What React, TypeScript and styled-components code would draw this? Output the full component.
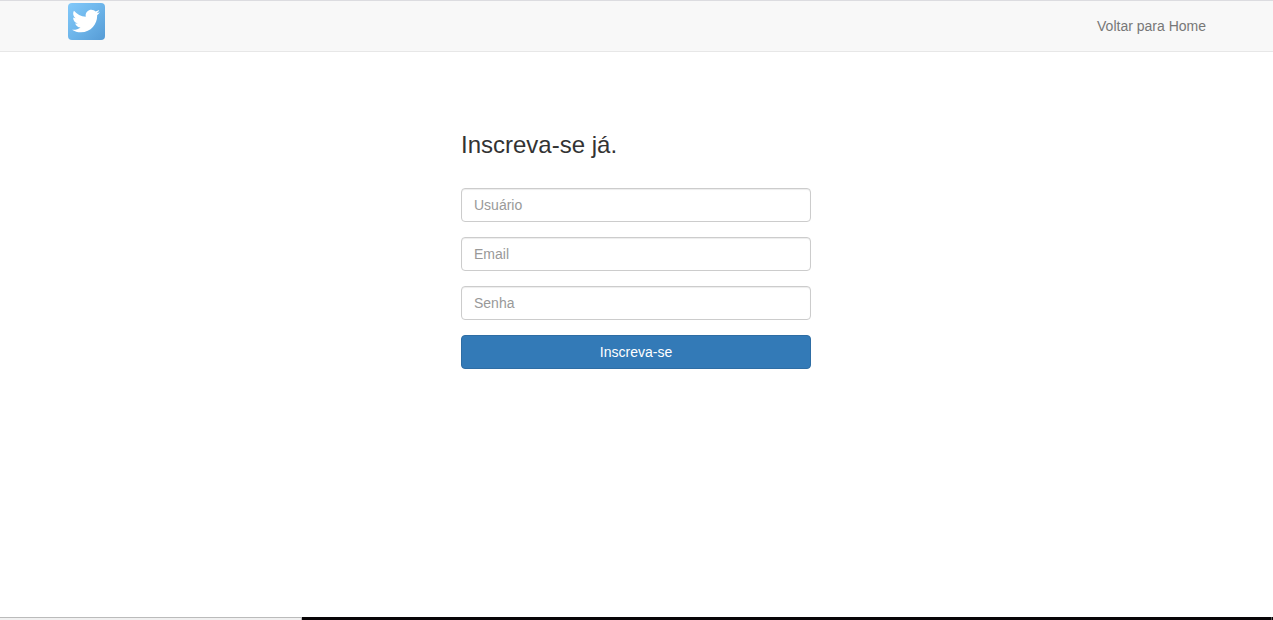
import React from "react";
import styled, { createGlobalStyle } from "styled-components";
import { FaTwitter } from "react-icons/fa";

const GlobalStyle = createGlobalStyle`
  *, *::before, *::after { box-sizing: border-box; }
  body {
    margin: 0;
    background: #fff;
    color: #333;
    font: 14px/20px "Liberation Sans", Arial, sans-serif;
    overflow: hidden;
  }
`;

const Page = styled.div`
  display: flex;
  flex-direction: column;
  height: 620px;
`;

const Navbar = styled.nav`
  height: 52px;
  flex: none;
  background: #f8f8f8;
  border-top: 1px solid #dcdce0;
  border-bottom: 1px solid #e7e7e7;
`;

const NavInner = styled.div`
  display: flex;
  justify-content: space-between;
  align-items: flex-start;
  padding: 2px 67px 0 68px;
`;

const Logo = styled.a`
  display: flex;
  align-items: center;
  justify-content: center;
  width: 37px;
  height: 37px;
  padding: 0 1px 1px 0;
  border-radius: 4px;
  color: #fff;
  background: linear-gradient(135deg, #82c9fa 0%, #6db5ea 50%, #569bd5 100%);
`;

const NavLink = styled.a`
  padding: 13px 0 15px;
  color: #777;
  text-decoration: none;
`;

const Main = styled.main`
  flex: 1;
  padding: 80px 0 0 461px;
`;

const Form = styled.form`
  display: flex;
  flex-direction: column;
  gap: 15px;
  width: 350px;
`;

const Title = styled.h3`
  margin: 0 0 15px;
  font-size: 24px;
  font-weight: 500;
  line-height: 26px;
`;

const Input = styled.input`
  width: 100%;
  height: 34px;
  padding: 6px 12px;
  font: inherit;
  color: #555;
  background: #fff;
  border: 1px solid #ccc;
  border-radius: 4px;
  box-shadow: inset 0 1px 1px rgba(0, 0, 0, 0.075);
  &::placeholder { color: #999; opacity: 1; }
`;

const SubmitButton = styled.button`
  height: 34px;
  padding: 6px 12px;
  font: inherit;
  color: #fff;
  background: #337ab7;
  border: 1px solid #2e6da4;
  border-radius: 4px;
`;

const BottomEdge = styled.footer`
  display: flex;
  flex: none;
  height: 3px;
`;

const StatusStrip = styled.div`
  width: 302px;
  background: #f1f1f1;
  border-top: 1px solid #bbb;
  border-right: 1px solid #bbb;
`;

const DarkStrip = styled.div`
  flex: 1;
  background: #080507;
`;

const EndMarker = styled.div`
  width: 1px;
  margin-right: 1px;
  background: #555;
  box-shadow: 1px 0 0 #080507;
`;

export default function App() {
  return (
    <>
      <GlobalStyle />
      <Page>
        <Navbar>
          <NavInner>
            <Logo aria-label="Twitter">
              <FaTwitter size={28} />
            </Logo>
            <NavLink href="#">Voltar para Home</NavLink>
          </NavInner>
        </Navbar>
        <Main>
          <Form>
            <Title>Inscreva-se já.</Title>
            <Input type="text" placeholder="Usuário" />
            <Input type="email" placeholder="Email" />
            <Input type="password" placeholder="Senha" />
            <SubmitButton type="button">Inscreva-se</SubmitButton>
          </Form>
        </Main>
        <BottomEdge>
          <StatusStrip />
          <DarkStrip />
          <EndMarker />
        </BottomEdge>
      </Page>
    </>
  );
}
